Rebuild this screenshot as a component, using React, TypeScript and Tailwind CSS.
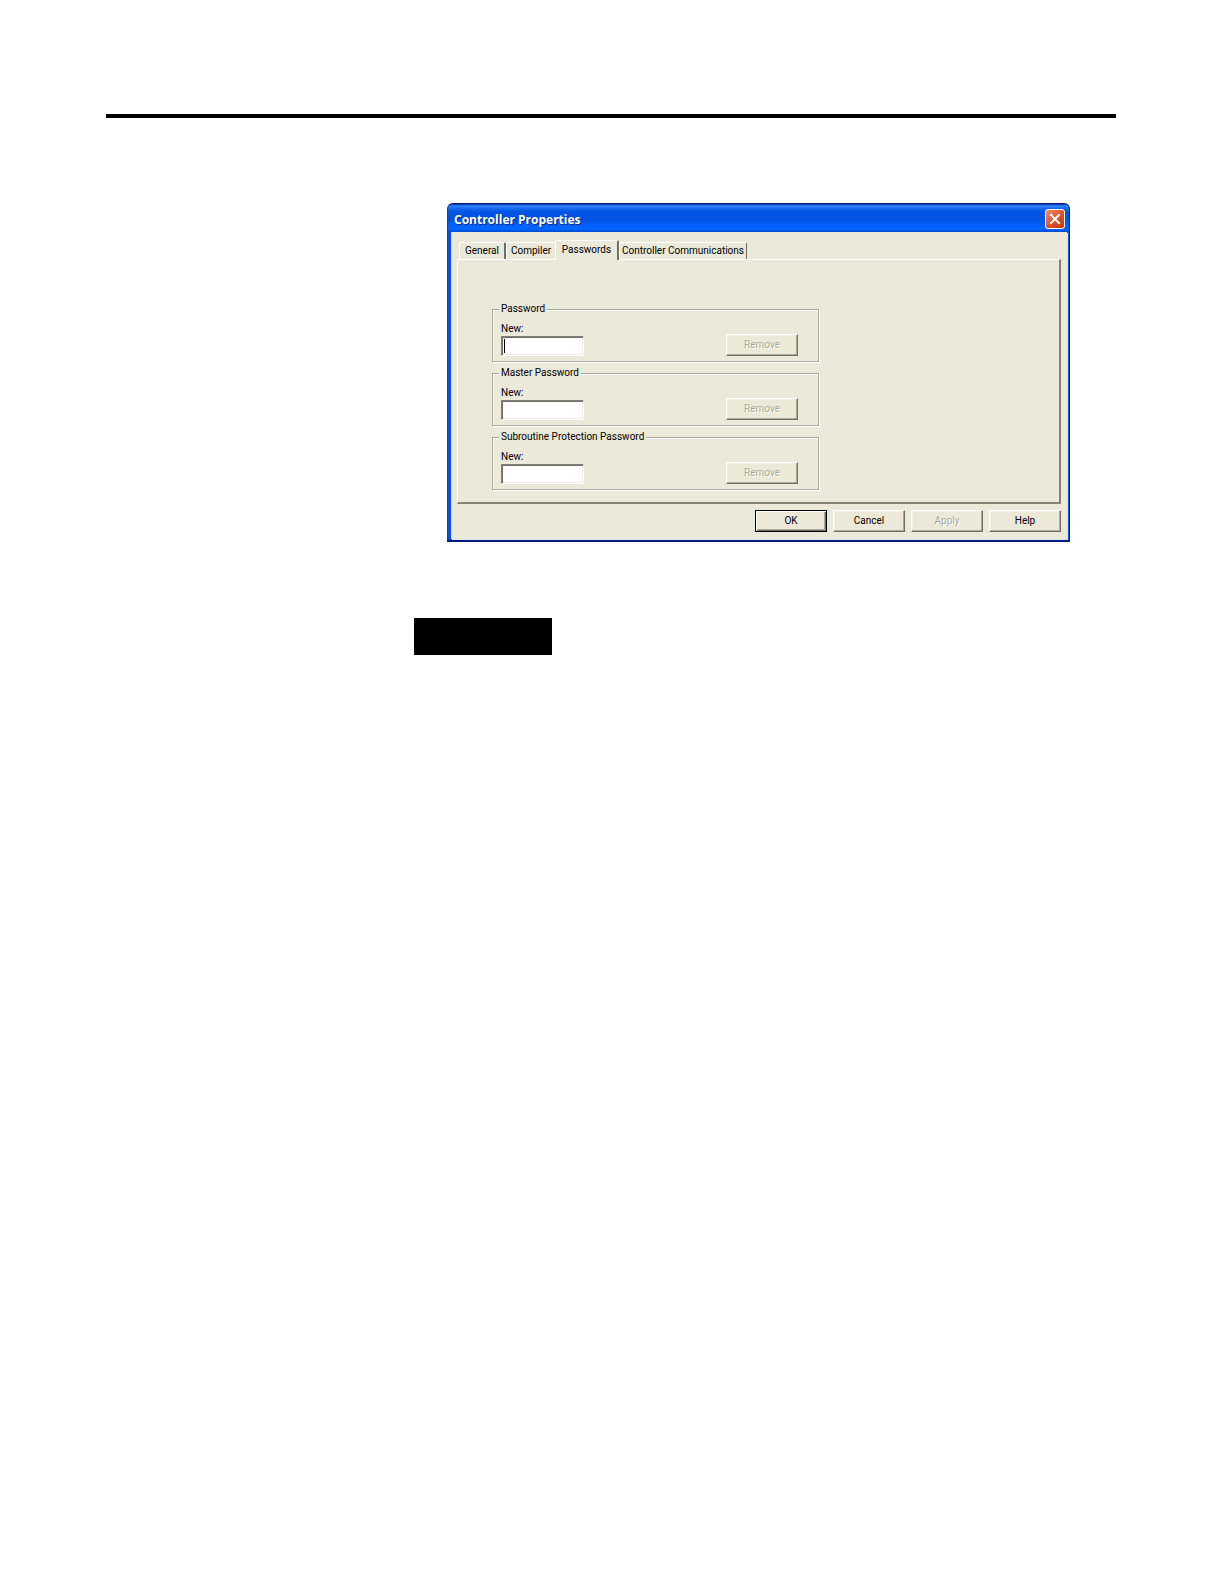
import React from "react";

const bevel =
  "border border-t-white border-l-white border-r-[#716f64] border-b-[#716f64] shadow-[inset_-1px_-1px_0_#aca899,inset_1px_1px_0_#f4f2e4]";

function PushButton({
  label,
  disabled = false,
  primary = false,
}: {
  label: string;
  disabled?: boolean;
  primary?: boolean;
}) {
  const frame = primary
    ? "border border-black shadow-[inset_1px_1px_0_#fff,inset_-1px_-1px_0_#716f64,inset_-2px_-2px_0_#aca899]"
    : bevel;
  const ink = disabled ? "text-[#aca899] [text-shadow:1px_1px_0_#fff]" : "text-black";
  return (
    <button
      type="button"
      disabled={disabled}
      className={`flex h-[22px] w-[72px] shrink-0 items-center justify-center bg-[#ece9d8] ${frame} ${ink}`}
    >
      {label}
    </button>
  );
}

function PasswordGroup({ id, title, caret = false }: { id: string; title: string; caret?: boolean }) {
  return (
    <fieldset className="h-[60px] min-w-0 border border-[#aca899] pr-5 pl-2 shadow-[1px_1px_0_#fff,inset_1px_1px_0_#fff]">
      <legend className="-ml-[2px] h-[14px] bg-[#ebe9d9] px-[2px] leading-[14px]">{title}</legend>
      <div className="flex items-end justify-between pt-[6px]">
        <div className="flex flex-col">
          <label htmlFor={id} className="h-[14px] leading-[14px]">
            New:
          </label>
          <div className="relative">
            <input
              id={id}
              type="password"
              className="block h-5 w-[83px] border border-t-[#808078] border-r-white border-b-white border-l-[#808078] bg-white px-1 shadow-[inset_1px_1px_0_#716f64,inset_-1px_-1px_0_#f1efe2] outline-none"
            />
            {caret && <span className="absolute top-[3px] left-[3px] h-[14px] w-px bg-black" />}
          </div>
        </div>
        <PushButton label="Remove" disabled />
      </div>
    </fieldset>
  );
}

const tabBase =
  "flex shrink-0 items-center justify-center border-t border-l border-white border-r-[#716f64] whitespace-nowrap rounded-t-[2px]";

function App() {
  return (
    <main className="min-h-screen bg-white pt-[114px] pr-[108px] pl-[106px] font-['Roboto','Liberation_Sans',sans-serif] text-[10px] leading-[14px] text-black">
      <hr className="h-1 border-0 bg-black" />

      <section
        aria-label="Controller Properties"
        className="mt-[85px] mr-[46px] ml-[341px] overflow-hidden rounded-t-[6px] border border-b-2 border-[#001a80] border-l-[#0a3fc0] bg-[#0a50e0]"
      >
        <header className="flex h-7 items-center justify-between bg-[linear-gradient(180deg,#0a2a90_0%,#2f86ff_7%,#1a6cf2_14%,#0054e3_28%,#0052e0_55%,#0062fb_78%,#0066ff_90%,#0048cc_100%)] pt-[2px] pr-1 pl-[6px]">
          <h1 className="pt-[2px] font-['Open_Sans','Noto_Sans',sans-serif] text-[12px] font-bold text-white [text-shadow:1px_1px_0_#0b2f8a]">
            Controller Properties
          </h1>
          <button
            type="button"
            aria-label="Close"
            className="flex size-5 items-center justify-center rounded-[3px] border border-white bg-linear-to-br from-[#ee8f6e] via-[#e0532a] to-[#c23a10]"
          >
            <svg viewBox="0 0 14 14" className="size-[14px]" fill="none" stroke="#fff" strokeWidth="2" strokeLinecap="square">
              <path d="M3 3 L11 11 M11 3 L3 11" />
            </svg>
          </button>
        </header>

        <div className="mr-[2px] mb-px ml-[3px] bg-[#ebe9d9] pt-[7px] pr-[6px] pb-[7px] pl-[6px] shadow-[1px_1px_0_#d5e8f8]">
          <div role="tablist" className="relative flex h-5 items-end pl-[2px]">
            <button type="button" role="tab" className={`${tabBase} h-[17px] w-[47px] border-r-2`}>
              General
            </button>
            <button type="button" role="tab" className={`${tabBase} h-[17px] w-[49px] border-r-0`}>
              Compiler
            </button>
            <button
              type="button"
              role="tab"
              aria-selected="true"
              className={`${tabBase} relative z-10 -mb-px h-5 w-[64px] border-r-2 bg-[#ebe9d9] pb-[2px]`}
            >
              Passwords
            </button>
            <button type="button" role="tab" className={`${tabBase} h-[17px] w-[128px] border-r`}>
              Controller Communications
            </button>
          </div>

          <div
            role="tabpanel"
            className="h-[245px] border-t border-r-2 border-b-2 border-l border-t-white border-r-[#85826f] border-b-[#85826f] border-l-white pt-[42px] pl-[34px]"
          >
            <form className="flex w-full max-w-[327px] flex-col gap-1">
              <PasswordGroup id="password" title="Password" caret />
              <PasswordGroup id="master-password" title="Master Password" />
              <PasswordGroup id="subroutine-password" title="Subroutine Protection Password" />
            </form>
          </div>

          <footer className="mt-[6px] flex justify-end gap-[6px]">
            <PushButton label="OK" primary />
            <PushButton label="Cancel" />
            <PushButton label="Apply" disabled />
            <PushButton label="Help" />
          </footer>
        </div>
      </section>

      <div className="mt-[76px] ml-[308px] h-[37px] w-[138px] bg-black" />
    </main>
  );
}

export default App;
